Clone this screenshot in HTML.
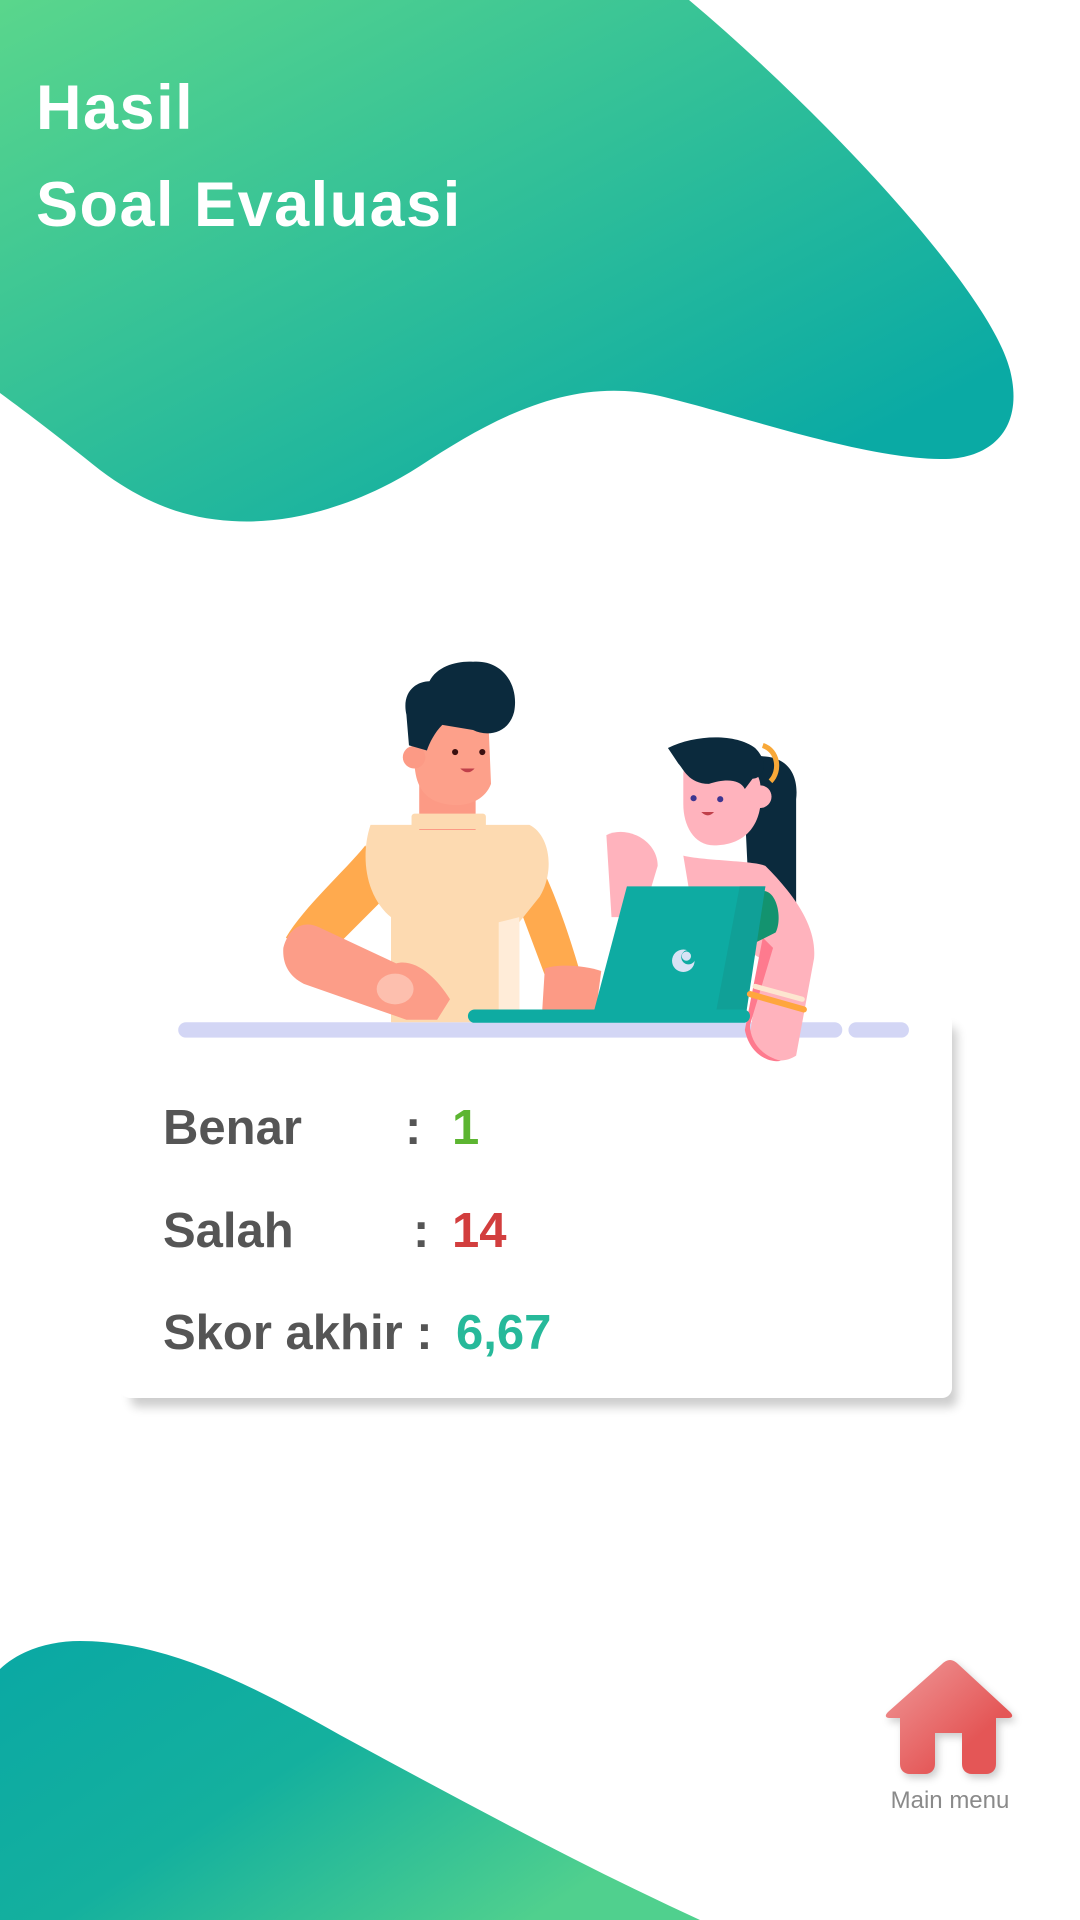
<!DOCTYPE html>
<html><head><meta charset="utf-8"><style>
html,body{margin:0;padding:0;background:#fff;}
body{width:1080px;height:1920px;position:relative;overflow:hidden;font-family:"Liberation Sans",sans-serif;}
svg{position:absolute;left:0;top:0;}
.t{position:absolute;color:#fff;font-weight:bold;font-size:63px;left:36px;letter-spacing:1.5px;}
.card{position:absolute;left:120px;top:1012px;width:832px;height:386px;background:#fff;border-radius:10px;box-shadow:8px 12px 10px -3px rgba(0,0,0,0.2);}
.r{position:absolute;font-weight:bold;font-size:49px;color:#555;}
</style></head><body>
<div class="card"></div>
<svg width="1080" height="1920" viewBox="0 0 1080 1920">
<defs>
<linearGradient id="g1" x1="0" y1="0" x2="1" y2="1"><stop offset="0" stop-color="#5ad68c"/><stop offset="0.85" stop-color="#0aaaa4"/></linearGradient>
<linearGradient id="g2" x1="0" y1="0" x2="1" y2="0.6"><stop offset="0" stop-color="#0aa8a4"/><stop offset="0.5" stop-color="#14b09e"/><stop offset="1" stop-color="#50d08e"/></linearGradient>
<linearGradient id="hg" x1="0" y1="0" x2="1" y2="1"><stop offset="0" stop-color="#f09a9a"/><stop offset="0.7" stop-color="#e45656"/></linearGradient>
</defs>
<path d="M0 0 L689 0 C820 110 990 290 1010 370 C1025 430 990 460 940 459 C860 458 740 415 660 396 C570 375 490 420 420 466 C360 505 290 525 232 521 C180 518 140 500 100 470 C60 438 30 415 0 393 Z" fill="url(#g1)"/>
<path d="M0 1669 C20 1650 50 1641 80 1641 C170 1641 260 1690 340 1735 C460 1800 580 1865 700 1920 L0 1920 Z" fill="url(#g2)"/>
<g transform="translate(150,630) scale(0.5128)">
<rect x="55" y="765" width="1295" height="30" rx="15" fill="#d3d6f5"/>
<rect x="1362" y="765" width="118" height="30" rx="15" fill="#d3d6f5"/>
<path d="M420 420 C380 470 300 540 265 600 L330 650 L460 520 Z" fill="#ffaa4e"/>
<path d="M740 420 C780 480 820 600 845 690 L780 700 L720 540 Z" fill="#ffaa4e"/>
<path d="M430 380 L740 380 C780 400 790 470 760 520 L720 570 L720 765 L470 765 L470 560 C420 520 410 440 430 380 Z" fill="#fddab1"/>
<path d="M680 570 L720 560 L720 765 L680 765 Z" fill="#ffecd8"/>
<rect x="525" y="300" width="110" height="90" fill="#fc9a85"/>
<rect x="510" y="358" width="145" height="30" rx="6" fill="#fddab1"/>
<path d="M515 180 L660 180 L665 300 C650 340 600 350 560 335 C520 320 515 280 515 240 Z" fill="#fda08a"/>
<circle cx="515" cy="248" r="22" fill="#fc9a85"/>
<path d="M500 165 C490 120 520 100 545 100 C560 70 600 60 630 62 C690 58 720 110 710 160 C700 200 660 210 630 195 L570 185 C555 200 545 220 540 235 L505 225 Z" fill="#0b2a3d"/>
<circle cx="595" cy="238" r="6" fill="#3a1010"/><circle cx="648" cy="238" r="6" fill="#3a1010"/>
<path d="M605 270 Q620 285 633 270 Z" fill="#c0404a"/>
<path d="M770 660 C800 650 850 655 880 665 L870 740 L765 740 Z" fill="#fc9a85"/>
<path d="M260 620 C270 580 300 565 330 580 L480 650 C520 640 560 680 585 720 L560 760 L500 760 L300 690 C270 675 258 650 260 620 Z" fill="#fc9d88"/>
<ellipse cx="478" cy="700" rx="36" ry="30" fill="#fdbfae"/>
<path d="M1155 250 C1250 230 1265 290 1260 330 L1260 560 L1170 560 Z" fill="#0b2a3d"/>
<path d="M1040 440 C1080 450 1180 450 1200 460 C1260 520 1300 580 1295 640 L1260 830 C1230 850 1180 840 1170 790 L1190 640 L1060 560 Z" fill="#ffb3bd"/>
<path d="M1170 770 L1215 620 L1195 600 L1160 780 C1170 830 1210 845 1230 840 C1190 830 1170 800 1170 770 Z" fill="#fe7a8e"/>
<path d="M1040 280 C1040 230 1180 230 1190 300 C1200 380 1160 420 1100 420 C1060 420 1040 380 1040 340 Z" fill="#ffb3bd"/>
<circle cx="1190" cy="325" r="22" fill="#ffb3bd"/>
<path d="M1010 230 C1060 205 1140 200 1180 230 C1210 260 1195 290 1175 290 L1160 310 C1150 290 1120 290 1090 300 C1050 300 1040 270 1030 260 Z" fill="#0b2a3d"/>
<path d="M1195 225 C1225 235 1230 275 1210 295" stroke="#f8a838" stroke-width="10" fill="none"/>
<circle cx="1060" cy="328" r="6" fill="#3d3590"/><circle cx="1112" cy="330" r="6" fill="#3d3590"/>
<path d="M1075 355 Q1088 368 1100 355 Z" fill="#c0404a"/>
<path d="M890 400 C930 380 990 410 990 460 L960 560 L900 560 Z" fill="#ffb3bd"/>
<path d="M1190 510 C1220 500 1235 560 1220 590 L1180 610 Z" fill="#13936f"/>
<path d="M930 500 L1200 500 L1150 765 L860 765 Z" fill="#0eaba2"/>
<path d="M1150 500 L1200 500 L1160 765 L1100 765 Z" fill="#10a097"/>
<rect x="620" y="740" width="550" height="26" rx="13" fill="#0eaba2"/>
<circle cx="1040" cy="645" r="22" fill="#d8e3f5"/><circle cx="1050" cy="638" r="14" fill="#0eaba2"/><circle cx="1046" cy="636" r="9" fill="#d8e3f5"/>
<path d="M1170 710 L1275 740" stroke="#ffa63d" stroke-width="12" stroke-linecap="round"/>
<path d="M1180 695 L1272 720" stroke="#fde6d0" stroke-width="10" stroke-linecap="round"/>
</g>
<path d="M950 1660 C947 1660 944 1662 942 1664 L888 1712 C884 1716 886 1718 890 1718 L900 1718 L900 1764 C900 1770 904 1774 910 1774 L925 1774 C931 1774 935 1770 935 1764 L935 1733 L962 1733 L962 1764 C962 1770 966 1774 972 1774 L986 1774 C992 1774 996 1770 996 1764 L996 1718 L1008 1718 C1012 1718 1014 1716 1010 1712 L958 1664 C956 1662 953 1660 950 1660 Z" fill="url(#hg)" style="filter:drop-shadow(3px 4px 4px rgba(0,0,0,0.2))"/>
<text x="950" y="1808" text-anchor="middle" font-family="Liberation Sans, sans-serif" font-size="24" fill="#8a8a8a">Main menu</text>
</svg>
<div class="t" style="top:72px;">Hasil</div>
<div class="t" style="top:169px;">Soal Evaluasi</div>
<div class="r" style="left:163px;top:1100px;">Benar</div>
<div class="r" style="left:405px;top:1100px;">:</div>
<div class="r" style="left:452px;top:1100px;color:#5cb531;">1</div>
<div class="r" style="left:163px;top:1203px;">Salah</div>
<div class="r" style="left:413px;top:1203px;">:</div>
<div class="r" style="left:452px;top:1203px;color:#d23e3e;">14</div>
<div class="r" style="left:163px;top:1305px;">Skor akhir :</div>
<div class="r" style="left:456px;top:1305px;color:#27b99a;">6,67</div>
</body></html>
